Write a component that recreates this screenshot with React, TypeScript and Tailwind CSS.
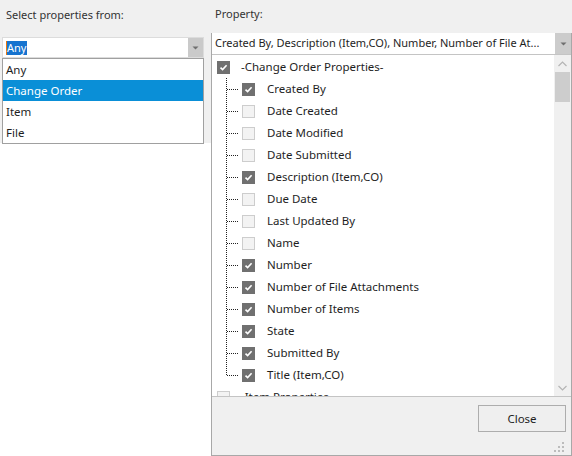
import React from 'react';

type Prop = { label: string; checked: boolean };

const coProps: Prop[] = [
  { label: 'Created By', checked: true },
  { label: 'Date Created', checked: false },
  { label: 'Date Modified', checked: false },
  { label: 'Date Submitted', checked: false },
  { label: 'Description (Item,CO)', checked: true },
  { label: 'Due Date', checked: false },
  { label: 'Last Updated By', checked: false },
  { label: 'Name', checked: false },
  { label: 'Number', checked: true },
  { label: 'Number of File Attachments', checked: true },
  { label: 'Number of Items', checked: true },
  { label: 'State', checked: true },
  { label: 'Submitted By', checked: true },
  { label: 'Title (Item,CO)', checked: true },
];

const sources = ['Any', 'Change Order', 'Item', 'File'];

const CheckBox: React.FC<{ checked: boolean }> = ({ checked }) =>
  checked ? (
    <div className="w-[13px] h-[13px] shrink-0 bg-[#707070] flex items-center justify-center">
      <svg width="9" height="9" viewBox="0 0 9 9">
        <path d="M1.5 4.6 L3.6 6.6 L7.6 2.2" fill="none" stroke="#fff" strokeWidth="1.6" />
      </svg>
    </div>
  ) : (
    <div className="w-[13px] h-[13px] shrink-0 bg-[#f3f3f3] border border-[#cdcdcd]" />
  );

const DropArrow: React.FC = () => (
  <svg width="7" height="4" viewBox="0 0 7 4">
    <path d="M0.5 0.5 L6.5 0.5 L3.5 3.5 Z" fill="#6f6f6f" />
  </svg>
);

// dotted tree connector for a child row
const Connector: React.FC<{ last: boolean }> = ({ last }) => (
  <svg width="12" height="22" viewBox="0 0 12 22" className="shrink-0">
    <line x1="0.5" y1="0" x2="0.5" y2={last ? 11.5 : 22} stroke="#222" strokeDasharray="1 1" />
    <line x1="1" y1="11.5" x2="12" y2="11.5" stroke="#222" strokeDasharray="1 1" />
  </svg>
);

const Chevron: React.FC<{ up?: boolean }> = ({ up }) => (
  <svg width="9" height="6" viewBox="0 0 9 6">
    <path d={up ? 'M0.5 5 L4.5 1 L8.5 5' : 'M0.5 1 L4.5 5 L8.5 1'} fill="none" stroke="#b4b4b4" strokeWidth="1.2" />
  </svg>
);

const App: React.FC = () => {
  return (
    <div
      className="flex w-[572px] h-[456px] overflow-hidden text-[11px] text-[#1e1e1e]"
      style={{ fontFamily: '"Noto Sans", "Open Sans", sans-serif' }}
    >
      {/* Left: source selector */}
      <div className="w-[211px] flex flex-col bg-white">
        <div className="h-[143px] bg-[#f0f0f0] pl-[2px] pr-[7px]">
          <div className="pt-[6px] pl-[4px] leading-[18px] text-[#333]">Select properties from:</div>

          {/* combo */}
          <div className="mt-[13px] h-[21px] flex border border-[#dcdcdc] bg-white">
            <div className="flex-1 flex items-center pl-[3px]">
              <span className="w-[1px] h-[14px] bg-[#e8780c]" />
              <span className="bg-[#1673cf] text-white leading-[14px] pr-[1px]">Any</span>
            </div>
            <div className="w-[15px] bg-[#cacaca] flex items-center justify-center">
              <DropArrow />
            </div>
          </div>

          {/* open list */}
          <div className="border border-[#a0a0a0] bg-white text-[11.5px]">
            {sources.map((s) => (
              <div
                key={s}
                className={
                  'h-[21px] flex items-center pl-[3px] ' +
                  (s === 'Change Order' ? 'bg-[#0a8fd7] text-white' : '')
                }
              >
                {s}
              </div>
            ))}
          </div>
        </div>
      </div>

      {/* Right: property picker */}
      <div className="w-[361px] flex flex-col bg-[#f0f0f0]">
        <div className="h-[33px] pt-[5px] pl-[4px] leading-[18px] text-[#333]">Property:</div>

        <div className="flex-1 flex flex-col border-l border-r border-b border-[#a8a8a8]">
          {/* combo */}
          <div className="h-[21px] flex bg-white">
            <div className="flex-1 flex items-center pl-[3px] overflow-hidden whitespace-nowrap">
              Created By, Description (Item,CO), Number, Number of File At...
            </div>
            <div className="w-[16px] bg-[#cccccc] flex items-center justify-center">
              <DropArrow />
            </div>
          </div>

          {/* tree list */}
          <div className="h-[343px] flex border-t border-b border-[#c4c4c4] bg-white text-[11.5px]">
            <div className="flex-1 overflow-hidden pt-[1px]">
              <div className="h-[22px] flex items-center pl-[5px]">
                <CheckBox checked />
                <span className="ml-[11px]">-Change Order Properties-</span>
              </div>
              {coProps.map((p, i) => (
                <div key={p.label} className="h-[22px] flex items-center pl-[14px]">
                  <Connector last={i === coProps.length - 1} />
                  <div className="ml-[4px]">
                    <CheckBox checked={p.checked} />
                  </div>
                  <span className="ml-[12px]">{p.label}</span>
                </div>
              ))}
              <div className="h-[22px] flex items-center pl-[5px]">
                <CheckBox checked={false} />
                <span className="ml-[11px]">-Item Properties-</span>
              </div>
            </div>

            {/* scrollbar */}
            <div className="w-[17px] bg-[#f0f0f0] flex flex-col items-center">
              <div className="h-[17px] flex items-center justify-center">
                <Chevron up />
              </div>
              <div className="w-[15px] h-[30px] bg-[#cdcdcd]" />
              <div className="flex-1" />
              <div className="h-[17px] flex items-center justify-center">
                <Chevron />
              </div>
            </div>
          </div>

          {/* footer */}
          <div className="flex-1 flex flex-col pt-[8px] pr-[5px]">
            <div className="flex justify-end">
              <button className="w-[88px] h-[27px] border border-[#adadad] bg-[#efefef] text-[#1e1e1e] text-[11.5px]">
                Close
              </button>
            </div>
            <div className="mt-auto flex justify-end pb-[2px] pr-[1px]">
              <svg width="11" height="11" viewBox="0 0 11 11">
                <rect x="8" y="0" width="2" height="2" fill="#bcbcbc" />
                <rect x="4" y="4" width="2" height="2" fill="#bcbcbc" />
                <rect x="8" y="4" width="2" height="2" fill="#bcbcbc" />
                <rect x="0" y="8" width="2" height="2" fill="#bcbcbc" />
                <rect x="4" y="8" width="2" height="2" fill="#bcbcbc" />
                <rect x="8" y="8" width="2" height="2" fill="#bcbcbc" />
              </svg>
            </div>
          </div>
        </div>
      </div>
    </div>
  );
};

export default App;
